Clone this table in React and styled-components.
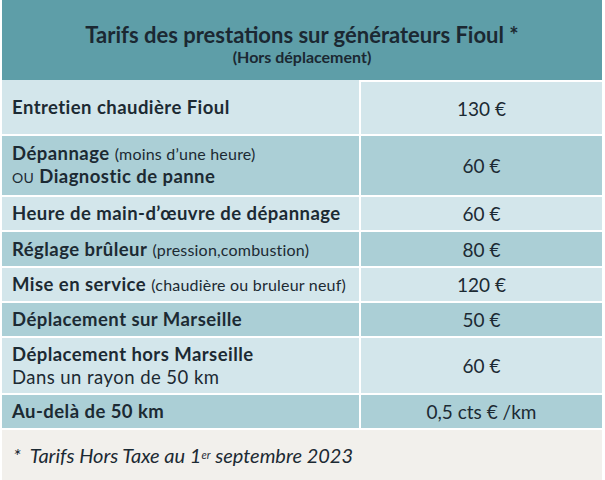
import React from "react";
import styled, { createGlobalStyle } from "styled-components";

const Global = createGlobalStyle`
  html, body { margin: 0; padding: 0; background: #ffffff; }
  body { font-family: Lato, "Open Sans", sans-serif; color: #1c2a33; }
`;

const Page = styled.div`
  width: 600px;
  padding: 0 3px 0 2px;
  background: #ffffff;
`;

const Header = styled.header`
  height: 80px;
  background: #5e9ea8;
  display: flex;
  flex-direction: column;
  align-items: center;
  padding-top: 21px;
  box-sizing: border-box;
`;

const Title = styled.h1`
  margin: 0;
  font-size: 22px;
  font-weight: 700;
  line-height: 27px;
  color: #1b2832;
`;

const Subtitle = styled.div`
  font-size: 16px;
  font-weight: 700;
  line-height: 18px;
  color: #1b2832;
`;

const Grid = styled.div`
  display: grid;
  grid-template-columns: 357px 241px;
  column-gap: 2px;
  row-gap: 2px;
  background: #ffffff;
`;

const Cell = styled.div`
  height: ${(p) => p.$h}px;
  background: ${(p) => (p.$dark ? "#abcfd6" : "#d3e6eb")};
  display: flex;
  flex-direction: column;
  justify-content: center;
  box-sizing: border-box;
  font-size: 18.5px;
  line-height: 23px;
  color: #1c2a33;
  white-space: nowrap;
`;

const Label = styled(Cell)`
  padding-left: 10px;
  letter-spacing: 0.45px;
`;

const Price = styled(Cell)`
  align-items: center;
  font-size: 19px;
  border-top: ${(p) => (p.$first ? "2px solid #ffffff" : "none")};
`;

const B = styled.span`
  font-weight: 700;
`;

const Small = styled.span`
  font-size: 16px;
  font-weight: 400;
  letter-spacing: 0.2px;
`;

const Ou = styled.span`
  font-size: 14px;
  letter-spacing: 0.3px;
`;

const Footer = styled.footer`
  margin-top: 2px;
  height: 50px;
  background: #f2f0ec;
  display: flex;
  align-items: center;
  padding-left: 11px;
  box-sizing: border-box;
  font-style: italic;
  font-size: 20px;
  color: #1c2a33;
`;

const Sup = styled.sup`
  font-size: 11px;
  line-height: 0;
  vertical-align: 8px;
`;

const rows = [
  { h: 54, label: <B>Entretien chaudière Fioul</B>, price: "130 €" },
  {
    h: 59,
    dark: true,
    label: (
      <>
        <div>
          <B>Dépannage</B> <Small>(moins d’une heure)</Small>
        </div>
        <div>
          <Ou>OU</Ou> <B>Diagnostic de panne</B>
        </div>
      </>
    ),
    price: "60 €",
  },
  { h: 33, label: <B>Heure de main-d’œuvre de dépannage</B>, price: "60 €" },
  {
    h: 34,
    dark: true,
    label: (
      <div>
        <B>Réglage brûleur</B> <Small>(pression,combustion)</Small>
      </div>
    ),
    price: "80 €",
  },
  {
    h: 33,
    label: (
      <div>
        <B>Mise en service</B> <Small>(chaudière ou bruleur neuf)</Small>
      </div>
    ),
    price: "120 €",
  },
  { h: 33, dark: true, label: <B>Déplacement sur Marseille</B>, price: "50 €" },
  {
    h: 55,
    label: (
      <>
        <div>
          <B>Déplacement hors Marseille</B>
        </div>
        <div>Dans un rayon de 50 km</div>
      </>
    ),
    price: "60 €",
  },
  { h: 33, dark: true, label: <B>Au-delà de 50 km</B>, price: "0,5 cts € /km" },
];

export default function App() {
  return (
    <>
      <Global />
      <Page>
        <Header>
          <Title>Tarifs des prestations sur générateurs Fioul *</Title>
          <Subtitle>(Hors déplacement)</Subtitle>
        </Header>
        <Grid>
          {rows.map((r, i) => (
            <React.Fragment key={i}>
              <Label $h={r.h} $dark={r.dark}>
                {r.label}
              </Label>
              <Price $h={r.h} $dark={r.dark} $first={i === 0}>
                {r.price}
              </Price>
            </React.Fragment>
          ))}
        </Grid>
        <Footer>
          *&nbsp;&nbsp;Tarifs Hors Taxe au 1<Sup>er</Sup>&nbsp;septembre 2023
        </Footer>
      </Page>
    </>
  );
}
